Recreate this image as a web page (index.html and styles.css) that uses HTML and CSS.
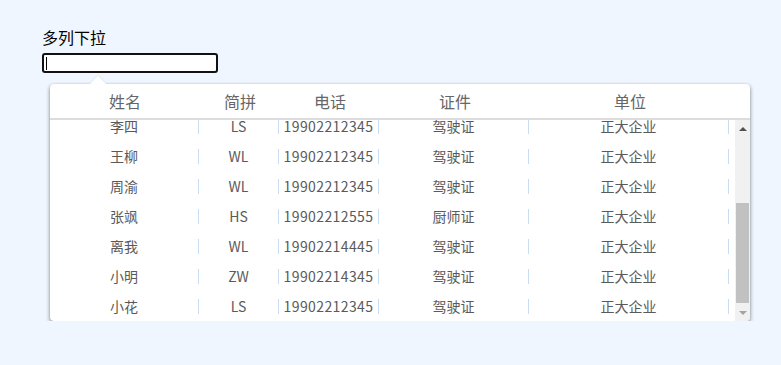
FILE: index.html
```html
<!DOCTYPE html>
<html lang="zh-CN">
<head>
<meta charset="utf-8">
<title>多列下拉</title>
<link rel="stylesheet" href="styles.css">
</head>
<body>
<div class="page">
  <div class="label">多列下拉</div>
  <div class="field"><span class="caret"></span></div>
  <div class="popup">
    <div class="head">
      <div class="hc w1">姓名</div>
      <div class="hc w2">简拼</div>
      <div class="hc w3">电话</div>
      <div class="hc w4">证件</div>
      <div class="hc w5">单位</div>
    </div>
    <div class="bodywrap">
      <div class="scroller">
        <div class="rows">
          <div class="row"><span class="c b1">张三</span><span class="c b2">ZS</span><span class="c b3">19902212345</span><span class="c b4">驾驶证</span><span class="c b5">正大企业</span></div>
          <div class="row"><span class="c b1">王五</span><span class="c b2">WW</span><span class="c b3">19902212345</span><span class="c b4">驾驶证</span><span class="c b5">正大企业</span></div>
          <div class="row"><span class="c b1">赵六</span><span class="c b2">ZL</span><span class="c b3">19902212345</span><span class="c b4">驾驶证</span><span class="c b5">正大企业</span></div>
          <div class="row"><span class="c b1">孙七</span><span class="c b2">SQ</span><span class="c b3">19902212345</span><span class="c b4">驾驶证</span><span class="c b5">正大企业</span></div>
          <div class="row"><span class="c b1">李四</span><span class="c b2">LS</span><span class="c b3">19902212345</span><span class="c b4">驾驶证</span><span class="c b5">正大企业</span></div>
          <div class="row"><span class="c b1">王柳</span><span class="c b2">WL</span><span class="c b3">19902212345</span><span class="c b4">驾驶证</span><span class="c b5">正大企业</span></div>
          <div class="row"><span class="c b1">周渝</span><span class="c b2">WL</span><span class="c b3">19902212345</span><span class="c b4">驾驶证</span><span class="c b5">正大企业</span></div>
          <div class="row"><span class="c b1">张飒</span><span class="c b2">HS</span><span class="c b3">19902212555</span><span class="c b4">厨师证</span><span class="c b5">正大企业</span></div>
          <div class="row"><span class="c b1">离我</span><span class="c b2">WL</span><span class="c b3">19902214445</span><span class="c b4">驾驶证</span><span class="c b5">正大企业</span></div>
          <div class="row"><span class="c b1">小明</span><span class="c b2">ZW</span><span class="c b3">19902214345</span><span class="c b4">驾驶证</span><span class="c b5">正大企业</span></div>
          <div class="row"><span class="c b1">小花</span><span class="c b2">LS</span><span class="c b3">19902212345</span><span class="c b4">驾驶证</span><span class="c b5">正大企业</span></div>
        </div>
      </div>
      <div class="sbar">
        <div class="sbtn"><span class="arrow-up"></span></div>
        <div class="strack"><div class="sthumb"></div></div>
        <div class="sbtn"><span class="arrow-down"></span></div>
      </div>
    </div>
  </div>
</div>
</body>
</html>
```

FILE: styles.css
```css
html, body {
  margin: 0;
  padding: 0;
  background: #eff6ff;
  font-family: "Noto Sans CJK SC", "Noto Sans", sans-serif;
}

.page {
  padding: 25px 0 0 42px;
}

.label {
  font-size: 16px;
  line-height: 24px;
  color: #000;
}

.field {
  display: flex;
  align-items: center;
  margin-top: 4px;
  width: 176px;
  height: 20px;
  box-sizing: border-box;
  border: 2px solid #111;
  border-radius: 3px;
  background: #fff;
  padding: 0 0 0 2px;
}

.caret {
  width: 1px;
  height: 13px;
  background: #000;
}

.popup {
  position: relative;
  margin: 11px 0 0 8px;
  width: 700px;
  background: #fff;
  border-radius: 4px;
  box-shadow: 0 2px 4px rgba(0, 0, 0, 0.45), 0 0 2px rgba(0, 0, 0, 0.12);
}

.popup::before {
  content: "";
  position: absolute;
  left: 40px;
  top: -8px;
  width: 0;
  height: 0;
  border-left: 8px solid transparent;
  border-right: 8px solid transparent;
  border-bottom: 8px solid #fff;
  filter: drop-shadow(0 -1px 1px rgba(0, 0, 0, 0.06));
}

.head {
  display: flex;
  height: 34px;
  align-items: center;
  border-bottom: 2px solid #dcdcdc;
  color: #666;
  font-size: 16px;
}

.hc {
  text-align: center;
  flex: none;
}

.w1 { width: 150px; }
.w2 { width: 80px; }
.w3 { width: 100px; }
.w4 { width: 150px; }
.w5 { width: 200px; }

.bodywrap {
  display: flex;
  height: 201px;
  border-radius: 0 0 4px 4px;
  overflow: hidden;
}

.scroller {
  flex: 1;
  overflow: hidden;
  display: flex;
  flex-direction: column-reverse;
}

.rows {
  flex: none;
}

.row {
  display: flex;
  align-items: center;
  height: 30px;
  color: #5a5a5a;
  font-size: 14px;
}

.c {
  flex: none;
  box-sizing: border-box;
  height: 15px;
  line-height: 14px;
  text-align: center;
  border-right: 1px solid #c9dcf0;
  white-space: nowrap;
}

.b1 { width: 149px; }
.b2 { width: 80px; }
.b3 { width: 100px; letter-spacing: 0.4px; }
.b4 { width: 150px; }
.b5 { width: 200px; }

.sbar {
  flex: none;
  width: 15px;
  background: #f1f1f1;
  display: flex;
  flex-direction: column;
}

.sbtn {
  flex: none;
  height: 17px;
  display: flex;
  align-items: center;
  justify-content: center;
}

.arrow-up {
  width: 0;
  height: 0;
  border-left: 4px solid transparent;
  border-right: 4px solid transparent;
  border-bottom: 4px solid #505050;
}

.arrow-down {
  width: 0;
  height: 0;
  border-left: 4px solid transparent;
  border-right: 4px solid transparent;
  border-top: 4px solid #a3a3a3;
}

.strack {
  flex: 1;
  display: flex;
  flex-direction: column;
  justify-content: flex-end;
  padding: 0 1px 1px;
}

.sthumb {
  height: 100px;
  background: #c1c1c1;
}
```
